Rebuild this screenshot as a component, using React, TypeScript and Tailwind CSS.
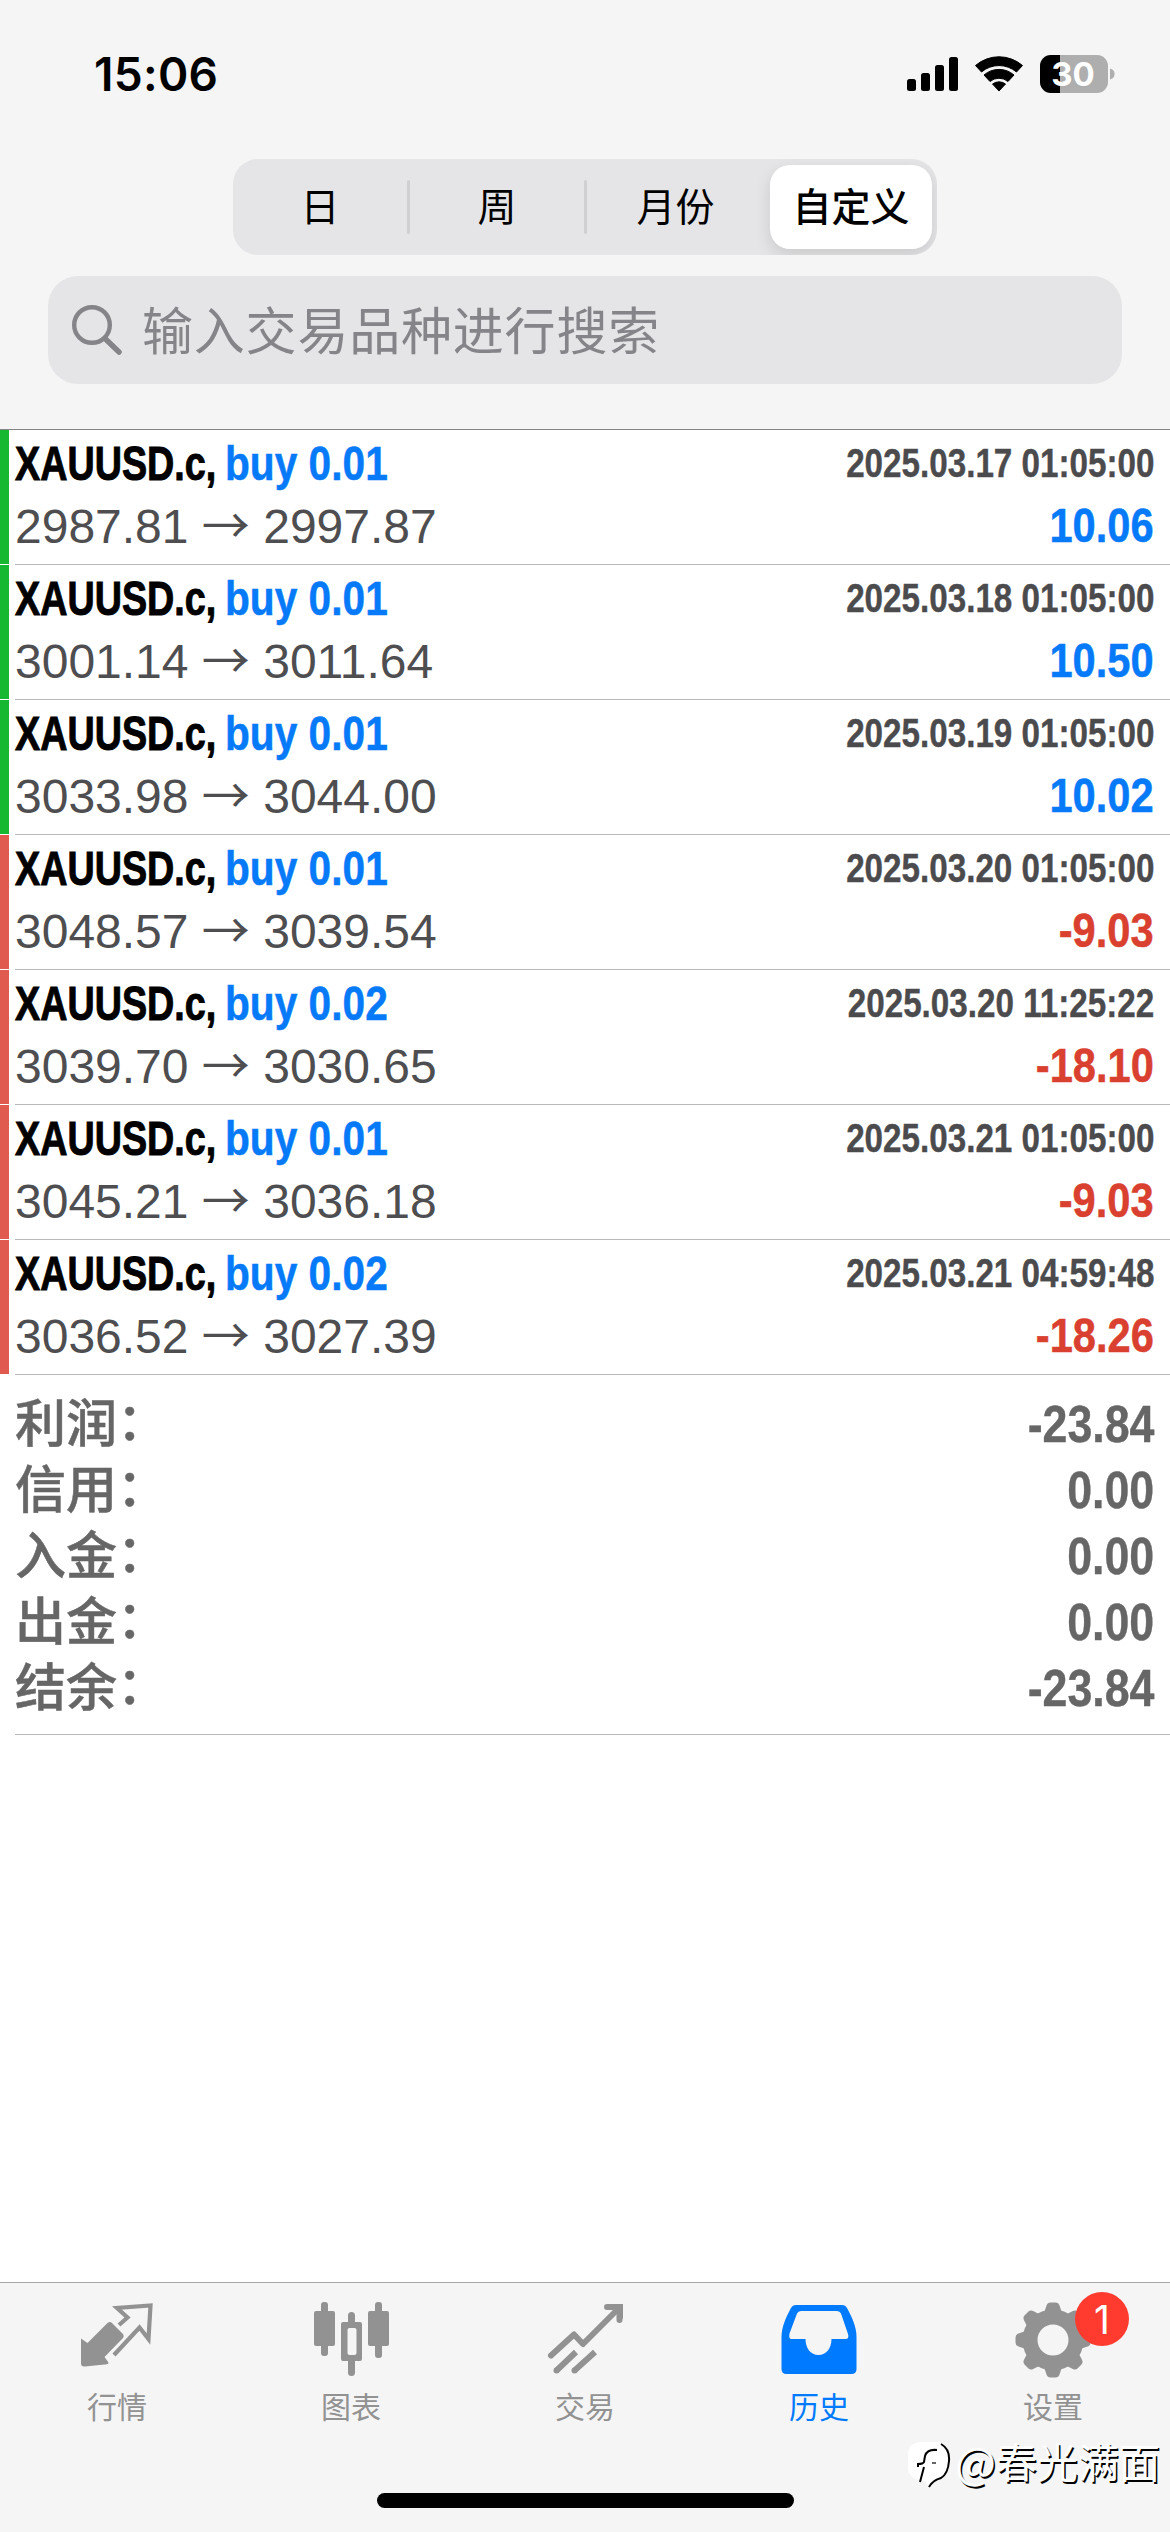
import type { ReactNode } from 'react';

interface Deal {
  lots: string;
  from: string;
  to: string;
  time: string;
  profit: string;
}

const deals: Deal[] = [
  { lots: '0.01', from: '2987.81', to: '2997.87', time: '2025.03.17 01:05:00', profit: '10.06' },
  { lots: '0.01', from: '3001.14', to: '3011.64', time: '2025.03.18 01:05:00', profit: '10.50' },
  { lots: '0.01', from: '3033.98', to: '3044.00', time: '2025.03.19 01:05:00', profit: '10.02' },
  { lots: '0.01', from: '3048.57', to: '3039.54', time: '2025.03.20 01:05:00', profit: '-9.03' },
  { lots: '0.02', from: '3039.70', to: '3030.65', time: '2025.03.20 11:25:22', profit: '-18.10' },
  { lots: '0.01', from: '3045.21', to: '3036.18', time: '2025.03.21 01:05:00', profit: '-9.03' },
  { lots: '0.02', from: '3036.52', to: '3027.39', time: '2025.03.21 04:59:48', profit: '-18.26' },
];

const summary = [
  { label: '利润', value: '-23.84' },
  { label: '信用', value: '0.00' },
  { label: '入金', value: '0.00' },
  { label: '出金', value: '0.00' },
  { label: '结余', value: '-23.84' },
];

function StatusBar() {
  return (
    <div className="flex h-[148px] items-center justify-between pl-[94px] pr-[55px]">
      <span className="font-['Inter'] text-[46px] font-semibold leading-none tracking-[0.3px]">15:06</span>
      <svg width="208" height="40" viewBox="0 0 208 40">
        <rect x="0" y="25" width="9" height="12" rx="2.5" />
        <rect x="14" y="19" width="9" height="18" rx="2.5" />
        <rect x="28" y="11" width="9" height="26" rx="2.5" />
        <rect x="42" y="3" width="9" height="34" rx="2.5" />
        <path d="M68.500 11.500a36 36 0 0 1 47 0l-6 6.500a27 27 0 0 0-35 0z" stroke="#000" strokeWidth="1" strokeLinejoin="round" />
        <path d="M77 21a23 23 0 0 1 30 0l-6 6.500a14 14 0 0 0-18 0z" stroke="#000" strokeWidth="1" strokeLinejoin="round" />
        <path d="M85.500 30a11 11 0 0 1 13 0l-6.500 7z" stroke="#000" strokeWidth="1" strokeLinejoin="round" />
        <rect x="133" y="1" width="68" height="38" rx="11" fill="#aeaeae" />
        <path d="M153 1h-9a11 11 0 0 0-11 11v16a11 11 0 0 0 11 11h9z" />
        <path d="M203 14.500c3.500 1 4.500 3 4.500 5.500s-1 4.500-4.500 5.500z" fill="#aeaeae" />
        <text x="166" y="32" textAnchor="middle" fill="#fff" fontFamily="Inter, sans-serif" fontSize="33" fontWeight="700">30</text>
      </svg>
    </div>
  );
}

function PeriodTabs() {
  return (
    <div className="mx-auto flex h-24 w-[704px] items-center overflow-hidden rounded-[25px] bg-[#e5e5e7] text-[39px] leading-none">
      <div className="w-[174px] pb-[5px] text-center">日</div>
      <div className="h-[54px] w-[3px] rounded bg-[#d0d0d3]" />
      <div className="w-[174px] pb-[5px] text-center">周</div>
      <div className="h-[54px] w-[3px] rounded bg-[#d0d0d3]" />
      <div className="w-[177px] pb-[5px] text-center">月份</div>
      <div className="ml-[6px] flex h-[84px] w-[162px] items-center justify-center rounded-[20px] bg-white pb-[5px] font-medium shadow-[0_6px_16px_rgba(0,0,0,0.12)]">
        自定义
      </div>
    </div>
  );
}

function SearchField() {
  return (
    <div className="mx-12 mt-[21px] flex h-[108px] items-center rounded-[30px] bg-[#e5e5e7] pl-6 text-[#858589]">
      <svg width="50" height="50" viewBox="0 0 50 50" fill="none" stroke="currentColor">
        <circle cx="20" cy="20" r="17.800" strokeWidth="4.400" />
        <path d="M33 33.500l14 13.500" strokeWidth="5.500" strokeLinecap="round" />
      </svg>
      <span className="ml-[20px] pb-1 text-[51px] leading-none tracking-[0.8px]">输入交易品种进行搜索</span>
    </div>
  );
}

function DealRow({ deal }: { deal: Deal }) {
  const loss = deal.profit.startsWith('-');
  return (
    <div className="flex h-[135px]">
      <div className={loss ? 'mb-px w-[9px] bg-[#e05a4f]' : 'mb-px w-[9px] bg-[#16b832]'} />
      <div className="ml-[6px] flex flex-1 flex-col border-b border-[#b9b9bb] pr-4 font-['Liberation_Sans','Noto_Sans_CJK_SC']">
        <div className="flex h-[66px] items-center justify-between font-bold leading-none">
          <div className="flex text-[49px]">
            <span className="w-[210px] origin-left scale-x-[0.77] whitespace-nowrap text-black [-webkit-text-stroke:1px]">XAUUSD.c,</span>
            <span className="origin-left scale-x-[0.83] whitespace-nowrap text-[#067af8] [-webkit-text-stroke:0.5px]">buy {deal.lots}</span>
          </div>
          <span className="origin-right scale-x-[0.83] text-[40px] text-[#4b4b4e] [-webkit-text-stroke:0.4px]">{deal.time}</span>
        </div>
        <div className="flex h-[59px] items-center justify-between text-[48px] leading-none">
          <span className="pt-[3px] text-[#4e4e51]">
            {deal.from} <span className="font-['Noto_Sans_CJK_SC'] leading-[0]">→</span> {deal.to}
          </span>
          <span className={loss ? 'origin-right scale-x-[0.85] text-[49px] font-bold text-[#d9402f] [-webkit-text-stroke:0.5px]' : 'origin-right scale-x-[0.85] text-[49px] font-bold text-[#067af8] [-webkit-text-stroke:0.5px]'}>
            {deal.profit}
          </span>
        </div>
      </div>
    </div>
  );
}

function Summary() {
  return (
    <div className="ml-[15px] h-[360px] border-b border-[#b9b9bb] pr-4 pt-[16px]">
      {summary.map((row) => (
        <div key={row.label} className="flex h-[66px] items-center justify-between leading-none text-[#666]">
          <div className="flex pb-[8px] text-[51px] font-medium [-webkit-text-stroke:0.5px]">
            <span>{row.label}</span>
            <span className="-mt-0.5">：</span>
          </div>
          <span className="origin-right scale-x-[0.86] font-['Liberation_Sans'] text-[52px] font-bold [-webkit-text-stroke:0.4px]">{row.value}</span>
        </div>
      ))}
    </div>
  );
}

function QuotesIcon() {
  return (
    <svg width="76" height="76" viewBox="0 0 76 76">
      <path d="M2 36.500l6.500 4.500L28.500 21q2.500-2 4.500 0l11 11q1.500 2 0 4L25.500 55l4 5.500q0 1.500-1.500 1.800L6 64.500q-4 .5-4-3z" fill="currentColor" />
      <path d="M41 22l8.500-7.500-10.500-9.500 33.500-2.500-2 33.500-9-11.500L36 52" transform="translate(-1 1)" fill="none" stroke="currentColor" strokeWidth="4.200" />
    </svg>
  );
}

function ChartIcon() {
  return (
    <svg width="76" height="76" viewBox="0 0 76 76" fill="currentColor">
      <rect x="8" y="0" width="7" height="54" rx="3" />
      <rect x="1" y="9" width="21" height="35" rx="2" />
      <rect x="62" y="0" width="7" height="56" rx="3" />
      <rect x="55" y="9" width="21" height="35" rx="2" />
      <path d="M35 20v-6.500q0-3.500 3.500-3.500t3.500 3.500V20h5q2 0 2 2v35q0 2-2 2h-5v11.500q0 3.500-3.500 3.500t-3.500-3.500V59h-5q-2 0-2-2V22q0-2 2-2zM34.500 28v23q0 2 2 2h5q2 0 2-2V28q0-2-2-2h-5q-2 0-2 2z" fillRule="evenodd" />
    </svg>
  );
}

function TradeIcon() {
  return (
    <svg width="76" height="76" viewBox="0 0 76 76" fill="none" stroke="currentColor" strokeWidth="6">
      <path d="M4 53.500L27 32.500l9 9.500L71 7" strokeLinecap="round" strokeLinejoin="round" />
      <path d="M60 5h12.500v13" strokeLinecap="round" />
      <path d="M61 2h15v15z" fill="currentColor" stroke="none" />
      <path d="M9 69l20-19M27 69l21-19" />
      <circle cx="9.500" cy="68.500" r="3" fill="currentColor" stroke="none" />
      <circle cx="27.500" cy="68.500" r="3" fill="currentColor" stroke="none" />
    </svg>
  );
}

function HistoryIcon() {
  return (
    <svg width="76" height="76" viewBox="0 0 76 76" fill="currentColor">
      <path d="M15 3h46q3.500 0 5 3c5 9 9.500 19 9.500 29v32q0 5-5 5h-65q-5 0-5-5V35C.5 25 5 15 10 6q1.500-3 5-3zM20 9q-3 0-4 2.500L8.500 31.500q-1 5.500 2 5.500h14c0 9 5 16 13 16s13-7 13-16h14q4 0 2.500-5L60 11.500Q59 9 56 9z" fillRule="evenodd" />
    </svg>
  );
}

function SettingsIcon() {
  return (
    <svg width="76" height="76" viewBox="-38 -38 76 76" fill="currentColor">
      <circle r="23" fill="none" stroke="currentColor" strokeWidth="15" />
      {[0, 45, 90, 135, 180, 225, 270, 315].map((angle) => (
        <path key={angle} d="M-13-24.500q4-1 5.500-7l1-3q1-3 4-3h5q3 0 4 3l1 3q1.500 6 5.500 7z" transform={`rotate(${angle})`} />
      ))}
    </svg>
  );
}

function TabItem({ label, icon, active, badge }: { label: string; icon: ReactNode; active?: boolean; badge?: string }) {
  return (
    <div className={active ? 'flex flex-1 flex-col items-center pt-[19px] text-[#007aff]' : 'flex flex-1 flex-col items-center pt-[19px] text-[#929292]'}>
      <div className="relative">
        {icon}
        {badge && (
          <span className="absolute left-[60px] top-[-10px] flex size-[54px] items-center justify-center rounded-full bg-[#ff3b30] font-['Inter'] text-[39px] leading-none text-white">
            {badge}
          </span>
        )}
      </div>
      <span className="mt-[12px] text-[30px] leading-none">{label}</span>
    </div>
  );
}

function Watermark() {
  return (
    <div className="absolute bottom-[39px] right-[10px] flex items-center text-white">
      <svg width="44" height="50" viewBox="0 0 44 50">
        <path d="M14 1h14q14 0 14 14v9q0 13-13 15-5 2-8 7l-3-6Q1 39 1 26V15Q1 1 14 1z" fill="#fff" />
        <path d="M30 9q-10-1-12 6l-1 6q-1 2-6 2v3M17 26l-4 15" fill="none" stroke="#000" strokeWidth="2" />
        <path d="M25 22h4" stroke="#000" strokeWidth="1.200" />
        <path d="M34 3q9 5 8 17-1 13-8 17-8 2-12 9" fill="none" stroke="#000" strokeWidth="2" />
      </svg>
      <span className="ml-1 flex items-center pb-[11px] leading-none [text-shadow:1.5px_1.5px_0.5px_#000]">
        <span className="text-[43px]">@</span>
        <span className="text-[41px]">春光满面</span>
      </span>
    </div>
  );
}

export default function App() {
  return (
    <div className="relative flex h-[2532px] w-[1170px] flex-col overflow-hidden bg-white font-['Noto_Sans_CJK_SC',sans-serif] text-black">
      <header className="h-[430px] border-b border-[#858587] bg-[#f5f5f5]">
        <StatusBar />
        <div className="pt-[11px]">
          <PeriodTabs />
          <SearchField />
        </div>
      </header>
      <main className="flex-1">
        {deals.map((deal) => (
          <DealRow key={deal.time} deal={deal} />
        ))}
        <Summary />
      </main>
      <nav className="relative flex h-[250px] border-t border-[#a8a8aa] bg-[#f5f5f5]">
        <TabItem label="行情" icon={<QuotesIcon />} />
        <TabItem label="图表" icon={<ChartIcon />} />
        <TabItem label="交易" icon={<TradeIcon />} />
        <TabItem label="历史" icon={<HistoryIcon />} active />
        <TabItem label="设置" icon={<SettingsIcon />} badge="1" />
        <div className="absolute bottom-6 left-[377px] h-[15px] w-[417px] rounded-full bg-black" />
        <Watermark />
      </nav>
    </div>
  );
}
